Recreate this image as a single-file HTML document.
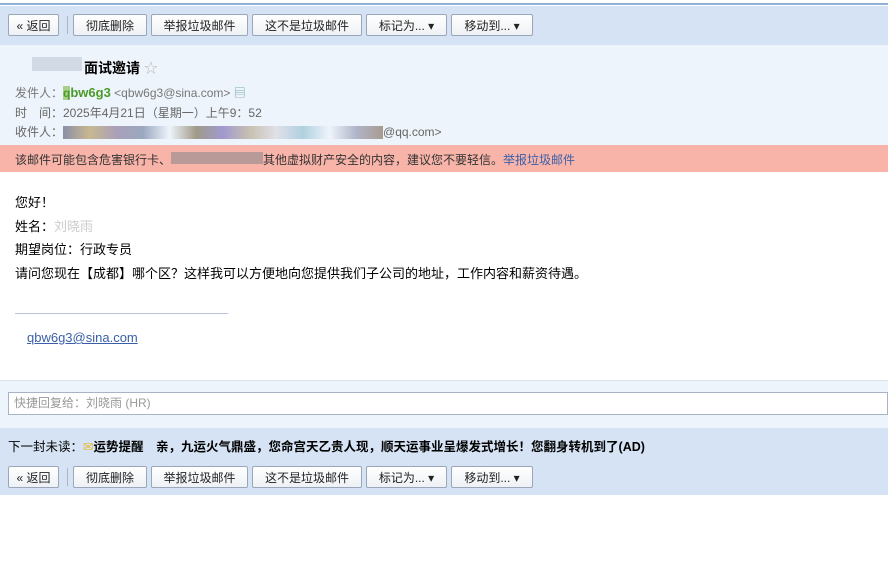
<!DOCTYPE html>
<html><head><meta charset="utf-8"><style>
body{margin:0;width:888px;height:568px;background:#fff;font-family:"Liberation Sans","Noto Sans CJK SC",sans-serif;font-size:12px;color:#000;position:relative;overflow:hidden}
.abs{position:absolute}
.tb{left:0;width:888px;background:#d5e3f4;height:39px}
.btn{position:absolute;top:8px;height:22px;line-height:22px;border:1px solid #9aa7b8;border-radius:2px;background:linear-gradient(#fff,#eef1f5);font-size:12px;color:#222;text-align:center;box-sizing:border-box}
.sep{position:absolute;top:10px;left:67px;width:1px;height:18px;background:#a8b6c8}
.b{font-weight:bold}
</style></head><body>
<div class="abs" style="top:0;left:0;width:888px;height:3px;background:#fff;border-bottom:2px solid #8fb1d6"></div>
<div class="abs tb" style="top:6px">
 <div class="btn" style="left:8px;width:51px">« 返回</div><div class="sep"></div>
 <div class="btn" style="left:73px;width:74px">彻底删除</div>
 <div class="btn" style="left:151px;width:97px">举报垃圾邮件</div>
 <div class="btn" style="left:252px;width:110px">这不是垃圾邮件</div>
 <div class="btn" style="left:366px;width:81px">标记为... ▾</div>
 <div class="btn" style="left:451px;width:82px">移动到... ▾</div>
</div>
<div class="abs" style="top:45px;left:0;width:888px;height:100px;background:#eef4fb"></div>
<div class="abs" style="top:57px;left:32px;width:50px;height:14px;background:#d2dbe5"></div>
<div class="abs b" style="top:58px;left:84px;font-size:14px">面试邀请 <span style="color:#bbb;font-weight:normal">☆</span></div>
<div class="abs" style="top:84px;left:15px;color:#777">发件人：<span style="background:#a8d08a;color:#4a9b2a" class="b">q</span><span class="b" style="color:#4a9b2a;font-size:13px">bw6g3</span> &lt;qbw6g3@sina.com&gt; <span style="color:#7aa">▤</span></div>
<div class="abs" style="top:104px;left:15px;color:#666">时　间：2025年4月21日（星期一）上午9：52</div>
<div class="abs" style="top:123px;left:15px;color:#666">收件人：<span style="display:inline-block;width:320px;height:13px;background:linear-gradient(90deg,#8a8fa8,#c8b890,#a9a0b9,#9aa8c0,#eef4fb,#a09a88,#a09ad0,#c8c0b0,#e0e0e8,#b0d0e0,#eef4fb,#b0b4c8,#a89c90);vertical-align:middle"></span>@qq.com&gt;</div>
<div class="abs" style="top:145px;left:0;width:888px;height:27px;background:#f8b4a9"></div>
<div class="abs" style="top:151px;left:15px;color:#333">该邮件可能包含危害银行卡、<span style="display:inline-block;width:92px;height:12px;background:#b89a98"></span>其他虚拟财产安全的内容，建议您不要轻信。<span style="color:#3a5fa8">举报垃圾邮件</span></div>
<div class="abs" style="top:191px;left:15px;font-size:13px;line-height:23.5px">您好！<br>姓名：<span style="color:#ccc">刘晓雨</span><br>期望岗位：行政专员<br>请问您现在【成都】哪个区？这样我可以方便地向您提供我们子公司的地址，工作内容和薪资待遇。</div>
<div class="abs" style="top:313px;left:15px;width:213px;height:1px;background:#b8c4dc"></div>
<div class="abs" style="top:330px;left:27px;font-size:13px;color:#3a5fa8;text-decoration:underline">qbw6g3@sina.com</div>
<div class="abs" style="top:380px;left:0;width:888px;height:48px;background:#eef4fb;border-top:1px solid #d8e2ee"></div>
<div class="abs" style="top:392px;left:8px;width:880px;height:23px;background:#fff;border:1px solid #a8b4c4;box-sizing:border-box;color:#999;line-height:21px;padding-left:5px">快捷回复给：刘晓雨 (HR)</div>
<div class="abs" style="top:428px;left:0;width:888px;height:67px;background:#d5e3f4"></div>
<div class="abs" style="top:458px;left:0;width:888px;height:1px;background:#c0d0e4"></div>
<div class="abs" style="top:436px;left:8px;font-size:12.5px">下一封未读：<span style="color:#e8b830">✉</span><span class="b">运势提醒</span>　<span class="b">亲，九运火气鼎盛，您命宫天乙贵人现，顺天运事业呈爆发式增长！您翻身转机到了(AD)</span></div>
<div class="abs tb" style="top:458px;height:37px">
 <div class="btn" style="left:8px;width:51px">« 返回</div><div class="sep"></div>
 <div class="btn" style="left:73px;width:74px">彻底删除</div>
 <div class="btn" style="left:151px;width:97px">举报垃圾邮件</div>
 <div class="btn" style="left:252px;width:110px">这不是垃圾邮件</div>
 <div class="btn" style="left:366px;width:81px">标记为... ▾</div>
 <div class="btn" style="left:451px;width:82px">移动到... ▾</div>
</div>
</body></html>
